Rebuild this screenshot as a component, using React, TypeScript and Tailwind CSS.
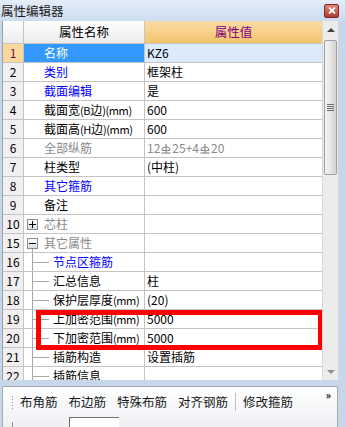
import type { FC, ReactNode } from "react";

type Row = {
  no: number;
  name: ReactNode;
  color?: "black" | "blue" | "gray";
  value?: ReactNode;
  valueGray?: boolean;
  kind?: "plain" | "plus" | "minus" | "child";
  selected?: boolean;
};

const SteelIcon: FC = () => (
  <svg width="10" height="12" viewBox="0 0 10 12" className="inline-block align-[-1px] mx-[1px]">
    <path d="M1 8.5 A4 3.5 0 0 1 9 8.5" fill="none" stroke="currentColor" strokeWidth="1.2" />
    <line x1="5" y1="2" x2="5" y2="11" stroke="currentColor" strokeWidth="1.2" />
    <line x1="0.5" y1="11" x2="9.5" y2="11" stroke="currentColor" strokeWidth="1.2" />
    <line x1="1" y1="8.5" x2="9" y2="8.5" stroke="currentColor" strokeWidth="1" />
  </svg>
);

// narrow ascii bits like "(mm)" the way the original bitmap font draws them
const Ascii: FC<{ children: ReactNode }> = ({ children }) => (
  <span className="text-[11px] tracking-[-0.4px]">{children}</span>
);

const rows: Row[] = [
  { no: 1, name: "名称", value: "KZ6", selected: true },
  { no: 2, name: "类别", color: "blue", value: "框架柱" },
  { no: 3, name: "截面编辑", color: "blue", value: "是" },
  { no: 4, name: <>截面宽<Ascii>(B</Ascii>边<Ascii>)(mm)</Ascii></>, value: "600" },
  { no: 5, name: <>截面高<Ascii>(H</Ascii>边<Ascii>)(mm)</Ascii></>, value: "600" },
  {
    no: 6,
    name: "全部纵筋",
    color: "gray",
    valueGray: true,
    value: (
      <>
        12<SteelIcon />25+4<SteelIcon />20
      </>
    ),
  },
  { no: 7, name: "柱类型", value: "(中柱)" },
  { no: 8, name: "其它箍筋", color: "blue" },
  { no: 9, name: "备注" },
  { no: 10, name: "芯柱", color: "gray", kind: "plus" },
  { no: 15, name: "其它属性", color: "gray", kind: "minus" },
  { no: 16, name: "节点区箍筋", color: "blue", kind: "child" },
  { no: 17, name: "汇总信息", kind: "child", value: "柱" },
  { no: 18, name: <>保护层厚度<Ascii>(mm)</Ascii></>, kind: "child", value: "(20)" },
  { no: 19, name: <>上加密范围<Ascii>(mm)</Ascii></>, kind: "child", value: "5000" },
  { no: 20, name: <>下加密范围<Ascii>(mm)</Ascii></>, kind: "child", value: "5000" },
  { no: 21, name: "插筋构造", kind: "child", value: "设置插筋" },
  { no: 22, name: "插筋信息", kind: "child" },
];

const colorClass = {
  black: "text-black",
  blue: "text-[#0000ff]",
  gray: "text-[#8a8a8a]",
};

const TreeBox: FC<{ plus?: boolean }> = ({ plus }) => (
  <div className="flex h-[11px] w-[11px] items-center justify-center border border-[#8c8c8c] bg-gradient-to-b from-white to-[#dcdcdc] text-[11px] leading-none text-black">
    <div className="relative h-[7px] w-[7px]">
      <div className="absolute left-0 top-[3px] h-px w-[7px] bg-black" />
      {plus && <div className="absolute left-[3px] top-0 h-[7px] w-px bg-black" />}
    </div>
  </div>
);

const NameCell: FC<{ row: Row }> = ({ row }) => {
  const color = row.selected ? "text-white" : colorClass[row.color ?? "black"];
  if (row.kind === "plus" || row.kind === "minus") {
    return (
      <div className={`flex h-full items-stretch ${color}`}>
        <div className="ml-[3px] flex w-[11px] flex-col items-center">
          <div className="flex-1" />
          <TreeBox plus={row.kind === "plus"} />
          <div className="flex flex-1 w-full justify-center">
            {row.kind === "minus" && <div className="w-px bg-[#a8a8a8]" />}
          </div>
        </div>
        <span className="ml-[6px] self-center">{row.name}</span>
      </div>
    );
  }
  if (row.kind === "child") {
    return (
      <div className={`flex h-full items-stretch ${color}`}>
        <div className="w-[8px]" />
        <div className="flex w-[17px] items-center border-l border-[#a8a8a8]">
          <div className="h-px w-[16px] bg-[#a8a8a8]" />
        </div>
        <span className="ml-[4px] self-center whitespace-nowrap">{row.name}</span>
      </div>
    );
  }
  return <div className={`flex h-full items-center pl-[20px] whitespace-nowrap ${color}`}>{row.name}</div>;
};

const GridRow: FC<{ row: Row }> = ({ row }) => (
  <div className="flex h-[19px] shrink-0 border-b border-[#c4c4c4]">
    <div
      className={`flex w-[21px] shrink-0 items-center justify-center border-r border-[#c4c4c4] ${
        row.selected ? "bg-[#fcd89c] text-[#6a0a50]" : "bg-[#f0f0f0] text-black"
      }`}
    >
      {row.no}
    </div>
    <div className={`w-[121px] shrink-0 border-r border-[#c4c4c4] ${row.selected ? "bg-[#3399ff]" : "bg-white"}`}>
      <NameCell row={row} />
    </div>
    <div
      className={`flex flex-1 items-center pl-[2px] whitespace-nowrap ${
        row.selected ? "bg-[#dcebfc]" : "bg-white"
      } ${row.valueGray ? "text-[#8a8a8a]" : "text-black"}`}
    >
      {row.value}
    </div>
  </div>
);

const ScrollBar: FC = () => (
  <div className="flex w-[16px] flex-col bg-[#ececec] border-l border-[#d8d8d8]">
    <div className="flex h-[17px] items-center justify-center">
      <div className="h-0 w-0 border-x-[4px] border-b-[4px] border-x-transparent border-b-[#404040]" />
    </div>
    <div className="mx-[1px] mt-[2px] flex h-[135px] flex-col items-center justify-center rounded-[2px] border border-[#a0a0a0] bg-gradient-to-r from-[#f4f4f4] via-[#e6e6e6] to-[#d2d2d2]">
      <div className="flex flex-col gap-[1px]">
        <div className="h-px w-[7px] bg-[#707070]" />
        <div className="h-px w-[7px] bg-[#707070]" />
        <div className="h-px w-[7px] bg-[#707070]" />
        <div className="h-px w-[7px] bg-[#707070]" />
      </div>
    </div>
    <div className="flex-1" />
    <div className="flex h-[17px] items-center justify-center">
      <div className="h-0 w-0 border-x-[4px] border-t-[4px] border-x-transparent border-t-[#909090]" />
    </div>
  </div>
);

const ToolButton: FC<{ children: ReactNode }> = ({ children }) => (
  <span className="whitespace-nowrap">{children}</span>
);

export default function App() {
  return (
    <div className="flex h-[427px] w-[345px] flex-col overflow-hidden bg-[#c6d7ec] font-['Noto_Sans_CJK_SC','Noto_Sans',sans-serif] text-[12px] leading-[18px]">
      {/* title bar */}
      <div className="flex h-[21px] shrink-0 items-center justify-between bg-gradient-to-b from-[#e4edf8] to-[#cddcef] pl-[1px] pr-[6px]">
        <span className="text-[12.5px] text-[#1a1a1a]">属性编辑器</span>
        <div className="flex h-[14px] w-[15px] items-center justify-center rounded-[2px] border border-[#7a2a2a] bg-gradient-to-b from-[#e0877a] to-[#b8382c]">
          <svg width="8" height="7" viewBox="0 0 8 7">
            <path d="M1 0.5 L7 6.5 M7 0.5 L1 6.5" stroke="white" strokeWidth="1.8" />
          </svg>
        </div>
      </div>

      {/* grid + scrollbar */}
      <div className="ml-[2px] mr-[7px] flex h-[359px] shrink-0 border-l border-[#a0a0a0] bg-white">
        <div className="relative flex w-[320px] flex-col overflow-hidden">
          <div className="flex h-[23px] shrink-0 border-b border-[#c4c4c4]">
            <div className="w-[21px] shrink-0 border-r border-[#c4c4c4] bg-gradient-to-b from-white to-[#ececec]" />
            <div className="flex w-[121px] shrink-0 items-center justify-center border-r border-[#c4c4c4] bg-gradient-to-b from-white to-[#ececec] text-[12.5px] text-black">
              属性名称
            </div>
            <div className="flex flex-1 items-center justify-center bg-gradient-to-b from-[#fbdca6] to-[#f2c36a] text-[12.5px] text-[#800080]">
              属性值
            </div>
          </div>
          {rows.map((r) => (
            <GridRow key={r.no} row={r} />
          ))}
          {/* highlight frame */}
          <div className="absolute left-[33px] top-[289px] h-[40px] w-[287px] border-[5px] border-[#ff0000]" />
        </div>
        <ScrollBar />
      </div>

      {/* lower panel */}
      <div className="mt-[6px] ml-[2px] mr-[7px] flex flex-1 flex-col rounded-t-[2px] border border-[#a8a8a8] bg-gradient-to-b from-white to-[#eef0f3]">
        <div className="flex h-[30px] items-center pl-[9px] pr-[6px] text-[12.5px] text-[#1a1a1a]">
          <div className="mr-[7px] flex flex-col gap-[2px]">
            <div className="h-px w-px bg-[#909090]" />
            <div className="h-px w-px bg-[#909090]" />
            <div className="h-px w-px bg-[#909090]" />
            <div className="h-px w-px bg-[#909090]" />
            <div className="h-px w-px bg-[#909090]" />
          </div>
          <div className="flex items-center gap-[11px]">
            <ToolButton>布角筋</ToolButton>
            <ToolButton>布边筋</ToolButton>
            <ToolButton>特殊布筋</ToolButton>
            <ToolButton>对齐钢筋</ToolButton>
          </div>
          <div className="mx-[7px] h-[18px] w-px bg-[#c0c0c0]" />
          <ToolButton>修改箍筋</ToolButton>
          <div className="flex-1" />
          <span className="self-start pt-[2px] text-[10px] font-bold leading-[12px] text-black">»</span>
        </div>
        <div className="flex items-start pl-[9px]">
          <div className="mt-[5px] h-[5px] w-px bg-[#909090]" />
          <div className="ml-[56px] h-[10px] w-[50px] border-l border-t border-[#707070] bg-white" />
        </div>
      </div>
    </div>
  );
}
